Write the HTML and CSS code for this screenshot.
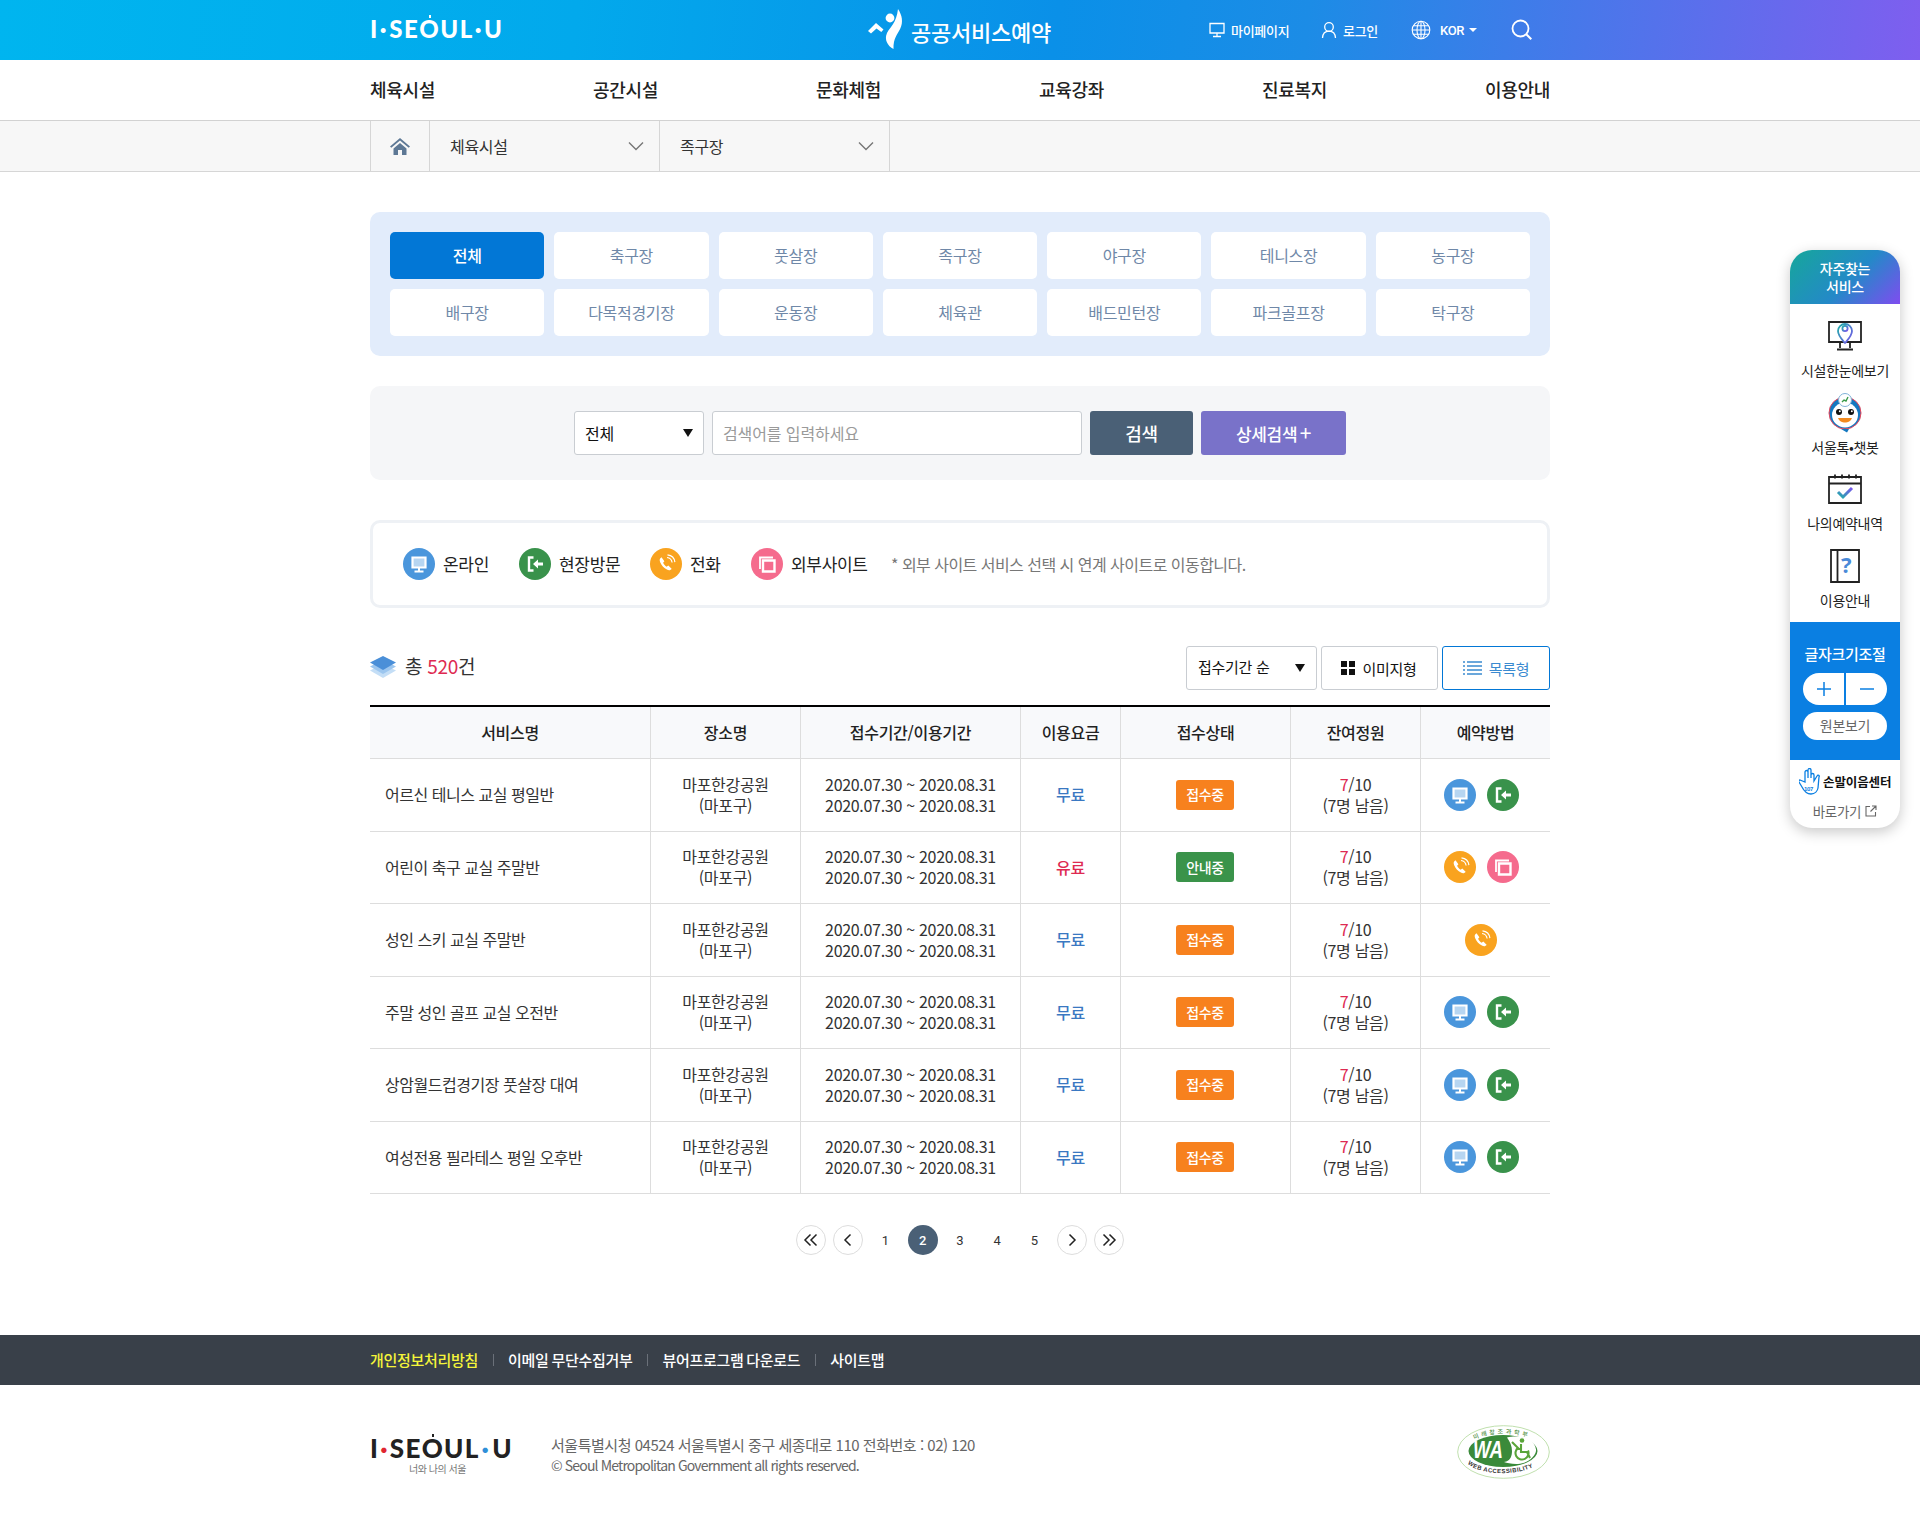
FILE: index.html
```html
<!DOCTYPE html>
<html lang="ko">
<head>
<meta charset="utf-8">
<title>공공서비스예약</title>
<link rel="stylesheet" href="styles.css">
</head>
<body>
<svg class="sprite" aria-hidden="true">
  <symbol id="i-monitor" viewBox="0 0 32 32"><path d="M9.500 9.500h13v10h-13z" fill="#fff" fill-opacity=".6" stroke="#fff" stroke-width="2.200"/><path d="M16 20v3M11.500 23.500h9" stroke="#fff" stroke-width="2" fill="none"/></symbol>
  <symbol id="i-door" viewBox="0 0 32 32"><path d="M14.500 9.500H10v13h4.500" stroke="#fff" stroke-width="2.400" fill="none"/><path d="M24 14.600h-5v-3l-5 4.400 5 4.400v-3h5z" fill="#fff"/></symbol>
  <symbol id="i-phone" viewBox="0 0 32 32"><path d="M11.500 9.200c-1.900 1-2.300 2.800-1.200 5.200 1.400 3.100 3.700 5.600 6.600 7.200 2 1 3.800.7 4.700-.9l-3.300-3.100-1.700 1.100c-1.500-1-2.700-2.400-3.500-4l1.300-1.500z" fill="#fff"/><path d="M17 9.500c2.600.3 4.700 2.300 5.100 5M17.500 6.800c4 .4 6.900 3.300 7.400 7.300" stroke="#fff" stroke-width="1.200" fill="none"/></symbol>
  <symbol id="i-window" viewBox="0 0 32 32"><path d="M9 21V9.500h13" stroke="#fff" stroke-width="1.800" fill="none"/><path d="M12 12.500h11.500v11H12z" stroke="#fff" stroke-width="2.400" fill="none"/></symbol>
</svg>

<header class="top">
  <div class="wrap top-in">
    <div class="logo logo-w">I<i class="dot">·</i><span>SE<b class="o">O</b>UL</span><i class="dot">·</i>U</div>
    <div class="brand">
      <svg class="emblem" viewBox="0 0 38 40"><circle cx="22" cy="9" r="4.400" fill="#fff"/><path d="M0 22 8 14l7.500 6.500-2.200 2.600-4.800-3.500-5.500 5z" fill="#fff"/><path d="M30 0c4 6 5.500 13 2.200 19.800-2.700 5.500-7 9.500-6.700 20.200-6-3-9.500-9.500-6.500-16 3-6 9.500-10 11-24z" fill="#fff"/></svg>
      <span class="brand-t">공공서비스예약</span>
    </div>
    <div class="util">
      <a class="util-a u1"><svg class="ui" viewBox="0 0 18 18"><path d="M2 2.500h14v9.500H2zM9 12v3.500M5 15.500h8" fill="none" stroke="#fff" stroke-width="1.300"/></svg>마이페이지</a>
      <a class="util-a u2"><svg class="ui" viewBox="0 0 18 18"><circle cx="9" cy="6" r="4.300" fill="none" stroke="#fff" stroke-width="1.300"/><path d="M2.500 17c.3-4.500 2.500-6.800 6.500-6.800s6.200 2.300 6.500 6.800" fill="none" stroke="#fff" stroke-width="1.300"/></svg>로그인</a>
      <a class="util-a u3"><svg class="ug" viewBox="0 0 20 20"><g fill="none" stroke="#fff" stroke-width="1.100"><circle cx="10" cy="10" r="8.800"/><ellipse cx="10" cy="10" rx="4" ry="8.800"/><path d="M10 1.200v17.600M1.200 10h17.600M2.400 5.800h15.200M2.400 14.200h15.200"/></g></svg>KOR<i class="caret"></i></a>
      <svg class="usearch" viewBox="0 0 22 22"><circle cx="9.500" cy="9.500" r="8" fill="none" stroke="#fff" stroke-width="1.800"/><path d="M15.300 15.300l5 5" stroke="#fff" stroke-width="2" fill="none"/></svg>
    </div>
  </div>
</header>

<nav class="gnb">
  <div class="wrap gnb-in">
    <a>체육시설</a><a>공간시설</a><a>문화체험</a><a>교육강좌</a><a>진료복지</a><a>이용안내</a>
  </div>
</nav>

<div class="crumb">
  <div class="wrap crumb-in">
    <div class="crumb-home"><svg viewBox="0 0 20 17" class="home"><path d="M10 0 0 8.500l1.300 1.300L10 2.600l8.700 7.200L20 8.500z" fill="#5d7895"/><path d="M3.500 10.500 10 5l6.500 5.500V17h-4.500v-5H8v5H3.500z" fill="#5d7895"/></svg></div>
    <div class="crumb-sel"><span>체육시설</span><svg class="chev" viewBox="0 0 16 10"><path d="M1 1.500l7 7 7-7" fill="none" stroke="#777" stroke-width="1.400"/></svg></div>
    <div class="crumb-sel"><span>족구장</span><svg class="chev" viewBox="0 0 16 10"><path d="M1 1.500l7 7 7-7" fill="none" stroke="#777" stroke-width="1.400"/></svg></div>
  </div>
</div>

<main class="wrap main">
  <section class="cats">
    <a class="cat on">전체</a><a class="cat">축구장</a><a class="cat">풋살장</a><a class="cat">족구장</a><a class="cat">야구장</a><a class="cat">테니스장</a><a class="cat">농구장</a>
    <a class="cat">배구장</a><a class="cat">다목적경기장</a><a class="cat">운동장</a><a class="cat">체육관</a><a class="cat">배드민턴장</a><a class="cat">파크골프장</a><a class="cat">탁구장</a>
  </section>

  <section class="search">
    <div class="fsel fsel-a"><span>전체</span><i class="tri"></i></div>
    <input class="kw" type="text" placeholder="검색어를 입력하세요">
    <button class="btn btn-s">검색</button>
    <button class="btn btn-d">상세검색 <span class="plus">+</span></button>
  </section>

  <section class="legend">
    <span class="lg lg1"><svg class="ic c-blue"><use href="#i-monitor"/></svg><span class="lg-t">온라인</span></span>
    <span class="lg lg2"><svg class="ic c-green"><use href="#i-door"/></svg><span class="lg-t">현장방문</span></span>
    <span class="lg lg3"><svg class="ic c-orange"><use href="#i-phone"/></svg><span class="lg-t">전화</span></span>
    <span class="lg lg4"><svg class="ic c-pink"><use href="#i-window"/></svg><span class="lg-t">외부사이트</span></span>
    <span class="lg-note">* 외부 사이트 서비스 선택 시 연계 사이트로 이동합니다.</span>
  </section>

  <section class="bar">
    <div class="total">
      <svg class="layers" viewBox="0 0 26 22"><path d="M13 8 26 14.500 13 22 0 14.500z" fill="#c4def6"/><path d="M13 4 26 10.500 13 18 0 10.500z" fill="#9cc6ef"/><path d="M13 0 26 6.500 13 14 0 6.500z" fill="#4a8fd8"/></svg>
      <span>총 <em>520</em>건</span>
    </div>
    <div class="tools">
      <div class="fsel fsel-b"><span>접수기간 순</span><i class="tri"></i></div>
      <a class="tool"><svg class="ti" viewBox="0 0 14 14"><path d="M0 0h6v6H0zM8 0h6v6H8zM0 8h6v6H0zM8 8h6v6H8z" fill="#111"/></svg>이미지형</a>
      <a class="tool tool-on"><svg class="tl" viewBox="0 0 19 14"><path d="M0 1h2M4 1h15M0 5h2M4 5h15M0 9h2M4 9h15M0 13h2M4 13h15" stroke="#3a8ad0" stroke-width="1.400" fill="none"/></svg>목록형</a>
    </div>
  </section>

  <table class="list">
    <colgroup><col class="w1"><col class="w2"><col class="w3"><col class="w4"><col class="w5"><col class="w6"><col class="w7"></colgroup>
    <thead><tr><th>서비스명</th><th>장소명</th><th>접수기간/이용기간</th><th>이용요금</th><th>접수상태</th><th>잔여정원</th><th>예약방법</th></tr></thead>
    <tbody>
      <tr><td class="nm">어르신 테니스 교실 평일반</td><td>마포한강공원<br>(마포구)</td><td>2020.07.30 ~ 2020.08.31<br>2020.07.30 ~ 2020.08.31</td><td class="free">무료</td><td><span class="bdg b-o">접수중</span></td><td><em>7</em>/10<br>(7명 남음)</td><td><span class="how"><svg class="ic c-blue"><use href="#i-monitor"/></svg><svg class="ic c-green"><use href="#i-door"/></svg></span></td></tr>
      <tr><td class="nm">어린이 축구 교실 주말반</td><td>마포한강공원<br>(마포구)</td><td>2020.07.30 ~ 2020.08.31<br>2020.07.30 ~ 2020.08.31</td><td class="paid">유료</td><td><span class="bdg b-g">안내중</span></td><td><em>7</em>/10<br>(7명 남음)</td><td><span class="how"><svg class="ic c-orange"><use href="#i-phone"/></svg><svg class="ic c-pink"><use href="#i-window"/></svg></span></td></tr>
      <tr><td class="nm">성인 스키 교실 주말반</td><td>마포한강공원<br>(마포구)</td><td>2020.07.30 ~ 2020.08.31<br>2020.07.30 ~ 2020.08.31</td><td class="free">무료</td><td><span class="bdg b-o">접수중</span></td><td><em>7</em>/10<br>(7명 남음)</td><td><span class="how"><svg class="ic c-orange"><use href="#i-phone"/></svg></span></td></tr>
      <tr><td class="nm">주말 성인 골프 교실 오전반</td><td>마포한강공원<br>(마포구)</td><td>2020.07.30 ~ 2020.08.31<br>2020.07.30 ~ 2020.08.31</td><td class="free">무료</td><td><span class="bdg b-o">접수중</span></td><td><em>7</em>/10<br>(7명 남음)</td><td><span class="how"><svg class="ic c-blue"><use href="#i-monitor"/></svg><svg class="ic c-green"><use href="#i-door"/></svg></span></td></tr>
      <tr><td class="nm">상암월드컵경기장 풋살장 대여</td><td>마포한강공원<br>(마포구)</td><td>2020.07.30 ~ 2020.08.31<br>2020.07.30 ~ 2020.08.31</td><td class="free">무료</td><td><span class="bdg b-o">접수중</span></td><td><em>7</em>/10<br>(7명 남음)</td><td><span class="how"><svg class="ic c-blue"><use href="#i-monitor"/></svg><svg class="ic c-green"><use href="#i-door"/></svg></span></td></tr>
      <tr><td class="nm">여성전용 필라테스 평일 오후반</td><td>마포한강공원<br>(마포구)</td><td>2020.07.30 ~ 2020.08.31<br>2020.07.30 ~ 2020.08.31</td><td class="free">무료</td><td><span class="bdg b-o">접수중</span></td><td><em>7</em>/10<br>(7명 남음)</td><td><span class="how"><svg class="ic c-blue"><use href="#i-monitor"/></svg><svg class="ic c-green"><use href="#i-door"/></svg></span></td></tr>
    </tbody>
  </table>

  <div class="pager">
    <a class="pg pg-b"><svg viewBox="0 0 16 14"><path d="M7.500 1.500 2 7l5.500 5.500M13.500 1.500 8 7l5.500 5.500" fill="none" stroke="#222" stroke-width="1.500"/></svg></a>
    <a class="pg pg-b"><svg viewBox="0 0 16 14"><path d="M10.500 1.500 5 7l5.500 5.500" fill="none" stroke="#222" stroke-width="1.500"/></svg></a>
    <a class="pg">1</a><a class="pg pg-on">2</a><a class="pg">3</a><a class="pg">4</a><a class="pg">5</a>
    <a class="pg pg-b"><svg viewBox="0 0 16 14"><path d="M5.500 1.500 11 7l-5.500 5.500" fill="none" stroke="#222" stroke-width="1.500"/></svg></a>
    <a class="pg pg-b"><svg viewBox="0 0 16 14"><path d="M2.500 1.500 8 7l-5.500 5.500M8.500 1.500 14 7l-5.500 5.500" fill="none" stroke="#222" stroke-width="1.500"/></svg></a>
  </div>
</main>

<footer>
  <div class="fbar">
    <div class="wrap fbar-in">
      <a class="hl">개인정보처리방침</a><a>이메일 무단수집거부</a><a>뷰어프로그램 다운로드</a><a>사이트맵</a>
    </div>
  </div>
  <div class="wrap finfo">
    <div class="flogo">
      <div class="logo logo-k">I<i class="dot d-r">·</i><span>SE<b class="o">O</b>UL</span><i class="dot d-b">·</i>U</div>
      <div class="flogo-s">너와 나의 서울</div>
    </div>
    <div class="ftext">
      <p>서울특별시청 04524 서울특별시 중구 세종대로 110 전화번호 : 02) 120</p>
      <p class="cr">© Seoul Metropolitan Government all rights reserved.</p>
    </div>
    <svg class="wa" viewBox="0 0 93 54">
      <defs>
        <path id="wa-top" d="M14 17 C26 6 66 6 80 17"/>
        <path id="wa-bot" d="M9 37 C22 52 68 52 86 36"/>
      </defs>
      <ellipse cx="46.500" cy="27" rx="45.800" ry="26.300" fill="#fff" stroke="#b9dca5" stroke-width=".9"/>
      <ellipse cx="46" cy="26" rx="34.500" ry="16" fill="#3a8a3a"/>
      <path d="M50 12.500c10-2.500 27-1 29 12 .8 6-8 14-18 14.500-6 .3-11-1-14-2 7-1 8-7 8-11 0-5-2-9-5-13.500z" fill="#fff"/>
      <text class="wa-t" x="16" y="33" textLength="30" lengthAdjust="spacingAndGlyphs">WA</text>
      <circle cx="65" cy="15.500" r="2.300" fill="#5aa53a"/>
      <path d="M55 17l7 7h3M64 19v8h6l3 6M71 25.500a6.500 6.500 0 1 1-9.500-3" fill="none" stroke="#5aa53a" stroke-width="2.100"/>
      <text class="wa-s"><textPath href="#wa-top" startOffset="6%">미래창조과학부</textPath></text>
      <text class="wa-b"><textPath href="#wa-bot" startOffset="3%">WEB ACCESSIBILITY</textPath></text>
    </svg>
  </div>
</footer>

<aside class="side">
  <div class="side-h">자주찾는<br>서비스</div>
  <div class="side-list">
    <a class="si">
      <span class="si-i"><svg class="si-s1" viewBox="0 0 34 32"><defs><linearGradient id="gp" x1="0" y1="0" x2="1" y2="1"><stop offset="0" stop-color="#1fb0a8"/><stop offset="1" stop-color="#7a52ee"/></linearGradient></defs><path d="M1 3h32v20H1zM12 23v6M22 23v6M9 30.500h16" fill="none" stroke="#222" stroke-width="1.800"/><path d="M17 24c-4-4.500-7-7.500-7-12a7 7 0 0 1 14 0c0 4.500-3 7.500-7 12z" fill="#fff" stroke="url(#gp)" stroke-width="1.800"/><circle cx="17" cy="9.500" r="2.600" fill="none" stroke="url(#gp)" stroke-width="1.800"/></svg></span>
      <span class="si-t">시설한눈에보기</span>
    </a>
    <a class="si">
      <span class="si-i"><svg class="si-s2" viewBox="0 0 36 40"><circle cx="18" cy="20" r="16" fill="#1478c0" stroke="#e8465a" stroke-width="1"/><ellipse cx="18" cy="22" rx="13" ry="12.500" fill="#fff"/><path d="M14 36l8 0-2 3.500z" fill="#1478c0"/><circle cx="12" cy="19" r="3" fill="#111"/><circle cx="24" cy="19" r="3" fill="#111"/><circle cx="12.800" cy="18.200" r="1" fill="#fff"/><circle cx="24.800" cy="18.200" r="1" fill="#fff"/><path d="M11 25h14c-1.500 3.500-4 4.500-7 4.500S12.500 28.500 11 25z" fill="#f28a1e"/><circle cx="18" cy="7" r="6.500" fill="#fff" stroke="#7fb2d8"/><path d="M15 9l2-2 2 1 2-4" stroke="#3a9a4a" stroke-width="1.400" fill="none"/></svg></span>
      <span class="si-t">서울톡•챗봇</span>
    </a>
    <a class="si">
      <span class="si-i"><svg class="si-s3" viewBox="0 0 34 30"><defs><linearGradient id="gc" x1="0" y1="1" x2="1" y2="0"><stop offset="0" stop-color="#1fb0a8"/><stop offset="1" stop-color="#7a52ee"/></linearGradient></defs><path d="M1 3h32v26H1zM1 9.500h32M7 .5v4M14 .5v4M21 .5v4M28 .5v4" fill="none" stroke="#222" stroke-width="1.800"/><path d="M10 18l5 5 9-9" fill="none" stroke="url(#gc)" stroke-width="3"/></svg></span>
      <span class="si-t">나의예약내역</span>
    </a>
    <a class="si">
      <span class="si-i"><svg class="si-s4" viewBox="0 0 30 34"><path d="M1 1h28v32H1zM7.500 1v32" fill="none" stroke="#222" stroke-width="1.800"/><text class="q" x="11" y="24">?</text></svg></span>
      <span class="si-t">이용안내</span>
    </a>
  </div>
  <div class="side-f">
    <div class="sf-t">글자크기조절</div>
    <div class="sf-pm"><span><svg viewBox="0 0 14 14"><path d="M7 0v14M0 7h14" stroke="#0a7fe2" stroke-width="1.500"/></svg></span><span><svg viewBox="0 0 14 14"><path d="M0 7h14" stroke="#0a7fe2" stroke-width="1.500"/></svg></span></div>
    <div class="sf-o">원본보기</div>
  </div>
  <div class="side-b">
    <div class="sb-l"><svg class="hand" viewBox="0 0 21 27"><path d="M1 12l5 2V4c0-2 3-2 3 0v6V2c0-2 3-2 3 0v8-3c0-2 3-2 3 0v6l3-5c1-2 3 0 2 1l-1 11c-.5 3-3 6-7 6-5 0-8-5-9-7L0 14c-.5-1 0-2 1-2z" fill="#fff" stroke="#0a7fe2" stroke-width="1.300"/><text class="h107" x="5" y="23">107</text></svg><span>손말이음센터</span></div>
    <div class="sb-g">바로가기<svg class="ext" viewBox="0 0 12 12"><path d="M5 1.500H1v9.500h9.500V7M7 1h4v4M11 1 5.500 6.500" fill="none" stroke="#666" stroke-width="1.100"/></svg></div>
  </div>
</aside>
</body>
</html>
```

FILE: styles.css
```css
* { box-sizing: border-box; }
html, body { margin: 0; padding: 0; }
body {
  position: relative;
  font-family: "Noto Sans CJK KR", "Noto Sans", sans-serif;
  font-size: 16px;
  letter-spacing: -0.3px;
  color: #333;
  background: #fff;
}
a { color: inherit; text-decoration: none; }
em { font-style: normal; }
p { margin: 0; }
.sprite { position: absolute; width: 0; height: 0; overflow: hidden; }
.wrap { width: 1180px; margin: 0 auto; }

/* top */
.top {
  height: 60px;
  background: linear-gradient(97deg, #00b5ef 0%, #02a9ec 30%, #0a90e8 55%, #1c8ce6 68%, #7f5eef 100%);
  color: #fff;
}
.top-in { display: flex; align-items: center; height: 60px; }
.logo { font-family: Lato, "Noto Sans", sans-serif; font-weight: 900; white-space: nowrap; line-height: 1; }
.logo span { position: relative; }
.logo i { font-style: normal; }
.logo .o { font-weight: 900; position: relative; }
.logo .o::before {
  content: ""; position: absolute; left: 50%; top: 5%;
  width: 2px; height: 3px; margin-left: -1px; background: currentColor;
}
.logo-w { font-size: 24px; width: 132px; color: #fff; letter-spacing: 1.550px; margin-top: -2px; }
.logo-w .dot { margin: 0 1px; }
.brand { display: flex; align-items: center; margin-left: 366px; width: 200px; }
.emblem { width: 38px; height: 40px; display: block; margin-top: -2px; }
.brand-t { font-size: 22px; font-weight: 500; margin-left: 5px; letter-spacing: -0.25px; line-height: 1; margin-top: 1px; white-space: nowrap; }
.util { display: flex; align-items: center; margin-left: 140px; font-size: 13px; font-weight: 500; }
.util-a { display: flex; align-items: center; white-space: nowrap; }
.ui { width: 18px; height: 18px; margin-right: 5px; }
.ug { width: 20px; height: 20px; margin-right: 9px; }
.u1 { width: 112px; }
.u2 { width: 91px; }
.u3 { width: 101px; font-size: 13px; font-family: Roboto, sans-serif; }
.caret { width: 0; height: 0; margin-left: 5px; border: 4px solid transparent; border-top-color: #fff; border-bottom: 0; }
.usearch { width: 22px; height: 22px; margin-left: -1px; }

/* gnb */
.gnb { height: 61px; border-bottom: 1px solid #d2d2d2; }
.gnb-in { display: flex; justify-content: space-between; align-items: center; height: 60px; padding-bottom: 2px; font-size: 18px; font-weight: 500; color: #222; }

/* crumb */
.crumb { height: 51px; background: #f7f7f7; border-bottom: 1px solid #d6d6d6; }
.crumb-in { display: flex; height: 50px; border-left: 1px solid #d6d6d6; }
.crumb-home { width: 59px; display: flex; align-items: center; justify-content: center; border-right: 1px solid #d6d6d6; }
.home { width: 20px; height: 17px; }
.crumb-sel { width: 230px; display: flex; align-items: center; justify-content: space-between; padding: 0 15px 0 20px; border-right: 1px solid #d6d6d6; color: #333; }
.crumb-sel span { margin-top: -1px; }
.chev { width: 16px; height: 10px; }

/* main */
.main { padding-top: 40px; display: block; }
.cats { display: grid; grid-template-columns: repeat(7, 1fr); gap: 10px; padding: 20px; background: #e2ecfb; border-radius: 10px; }
.cat { height: 47px; padding-bottom: 2px; display: flex; align-items: center; justify-content: center; background: #fff; border-radius: 5px; color: #6f88a8; }
.cat.on { background: #0277d6; color: #fff; font-weight: 500; }

.search { margin-top: 30px; padding: 25px 0; display: flex; justify-content: center; gap: 8px; background: #f5f6f8; border-radius: 10px; }
.fsel { display: flex; align-items: center; justify-content: space-between; height: 44px; background: #fff; border: 1px solid #c9cdd2; border-radius: 3px; color: #111; }
.fsel-a { width: 130px; padding: 0 10px; }
.fsel-b { width: 131px; padding: 0 11px; font-size: 15px; }
.fsel-b span { margin-top: -3px; }
.tri { width: 0; height: 0; border: 5px solid transparent; border-top: 8px solid #111; border-bottom: 0; }
.kw { width: 370px; height: 44px; padding: 0 10px; border: 1px solid #c9cdd2; border-radius: 3px; font: inherit; letter-spacing: -0.1px; background: #fff; outline: 0; }
.kw::placeholder { color: #9a9a9a; opacity: 1; }
.btn { height: 44px; border: 0; border-radius: 3px; color: #fff; font-family: inherit; font-weight: 500; letter-spacing: inherit; }
.btn-s { width: 103px; background: #4a6076; font-size: 18px; }
.btn-d { width: 145px; background: #7972c9; font-size: 17px; }
.plus { font-size: 21px; font-weight: 400; line-height: 1; margin-left: -2px; }

.legend { margin-top: 40px; height: 88px; display: flex; align-items: center; padding-left: 30px; border: 3px solid #eef1f5; border-radius: 10px; color: #222; font-size: 17px; }
.lg { display: flex; align-items: center; }
.lg .ic { margin-right: 8px; }
.lg-t { margin-top: -2px; }
.lg1 { width: 116px; }
.lg2 { width: 131px; }
.lg3 { width: 101px; }
.lg4 { width: 140px; }
.lg-note { color: #777; font-size: 16px; letter-spacing: -0.530px; }
.ic { width: 32px; height: 32px; border-radius: 50%; flex: none; display: block; }
.c-blue { background: #4a96dc; }
.c-green { background: #39924b; }
.c-orange { background: #f9a31f; }
.c-pink { background: #f56b8d; }

.bar { margin-top: 38px; display: flex; align-items: center; justify-content: space-between; }
.total { display: flex; align-items: center; font-size: 19px; color: #333; margin-top: -5px; }
.total em { color: #de2a52; }
.layers { width: 26px; height: 22px; margin-right: 9px; margin-top: 2px; }
.tools { display: flex; gap: 4px; }
.tool { height: 44px; display: flex; align-items: center; justify-content: center; border: 1px solid #c9cdd2; border-radius: 3px; font-size: 15px; color: #111; width: 117px; background: #fff; }
.tool-on { width: 108px; border-color: #0277d6; color: #3a8ad0; }
.ti { width: 14px; height: 14px; margin-right: 7px; margin-left: -1px; }
.tl { width: 19px; height: 14px; margin-right: 7px; }

.list { width: 1180px; margin-top: 15px; border-collapse: separate; border-spacing: 0; table-layout: fixed; border-top: 2px solid #000; }
.w1 { width: 281px; } .w2 { width: 150px; } .w3 { width: 220px; } .w4 { width: 100px; } .w5 { width: 170px; } .w6 { width: 130px; } .w7 { width: 129px; }
.list th, .list td { padding: 0; text-align: center; border-right: 1px solid #ddd; border-bottom: 1px solid #ddd; line-height: 21px; }
.list th:last-child, .list td:last-child { border-right: 0; }
.list th { height: 52px; background: #f8f9fb; font-weight: 500; color: #222; }
.list td { height: 72.500px; color: #333; }
.list td.nm { text-align: left; padding-left: 15px; letter-spacing: -0.470px; }
.list td.free { color: #3a78c2; font-weight: 500; }
.list td.paid { color: #de2a52; font-weight: 500; }
.list td em { color: #de2a52; }
.bdg { display: inline-flex; align-items: center; justify-content: center; width: 58px; height: 30px; margin-right: 1px; border-radius: 3px; color: #fff; font-size: 14px; font-weight: 500; vertical-align: middle; }
.b-o { background: #f7811e; }
.b-g { background: #3a934a; }
.how { display: flex; justify-content: center; gap: 11px; padding-right: 9px; }

.pager { margin-top: 31px; display: flex; justify-content: center; gap: 7.250px; height: 30px; }
.pg { width: 30px; height: 30px; border-radius: 50%; display: flex; align-items: center; justify-content: center; font-family: Roboto, sans-serif; font-size: 13px; color: #333; letter-spacing: 0; }
.pg-b { border: 1px solid #ddd; }
.pg-b svg { width: 16px; height: 14px; }
.pg-on { background: #4a6076; color: #fff; font-weight: 500; }

/* footer */
footer { margin-top: 80px; }
.fbar { height: 50px; background: #394049; }
.fbar-in { display: flex; align-items: center; height: 50px; padding-bottom: 2px; font-size: 15px; font-weight: 500; color: #fff; word-spacing: -1px; }
.fbar-in a + a { margin-left: 15px; padding-left: 15px; position: relative; }
.fbar-in a + a::before { content: ""; position: absolute; left: 0; top: 5px; height: 12px; width: 1px; background: #6a7079; }
.fbar-in .hl { color: #f5f53a; }
.finfo { height: 145px; display: flex; align-items: flex-start; }
.flogo { width: 141px; margin-top: 50px; }
.logo-k { font-size: 26px; color: #222; text-align: left; letter-spacing: 1.300px; }
.d-r { color: #e0262f; margin: 0 1px; }
.d-b { color: #2f8fd8; margin: 0 2px; }
.flogo-s { font-size: 10px; color: #777; line-height: 14px; margin-top: 1px; padding-right: 6px; text-align: center; letter-spacing: -0.5px; }
.ftext { margin-left: 40px; margin-top: 50px; font-size: 15px; color: #666; letter-spacing: -0.470px; line-height: 20px; }
.ftext .cr { font-size: 14px; letter-spacing: -0.850px; }
.wa { width: 93px; height: 54px; margin-left: auto; margin-top: 40px; }
.wa-t { font-family: "Liberation Sans", sans-serif; font-weight: 700; font-style: italic; font-size: 23px; fill: #fff; letter-spacing: 0; }
.wa-s { font-size: 6px; line-height: 1; fill: #4f8f3f; letter-spacing: 2.500px; font-weight: 500; }
.wa-b { font-family: "Liberation Sans", sans-serif; font-weight: 700; font-size: 6px; fill: #333; letter-spacing: .4px; }

/* side */
.side { position: absolute; top: 250px; left: 1790px; width: 110px; height: 578px; border-radius: 22px; background: #fff; box-shadow: 0 4px 14px rgba(0,0,0,.22); overflow: hidden; }
.side-h { height: 54px; display: flex; align-items: center; justify-content: center; text-align: center; font-size: 14px; font-weight: 500; line-height: 18px; color: #fff; background: linear-gradient(135deg, #16a79a 0%, #2489c8 55%, #7f4cf0 100%); }
.side-list { padding: 8px 0 4px; }
.si { display: flex; flex-direction: column; align-items: center; height: 76.500px; }
.si-i { height: 38px; margin-top: 4px; display: flex; align-items: center; justify-content: center; }
.si-t { height: 20px; margin-top: 6px; line-height: 20px; font-size: 14px; color: #222; white-space: nowrap; }
.si-s1 { width: 34px; height: 32px; }
.si-s2 { width: 36px; height: 40px; margin-top: 2px; }
.si-s3 { width: 34px; height: 30px; margin-top: 2px; }
.si-s4 { width: 30px; height: 34px; margin-top: 2px; }
.q { font-family: "Noto Sans", sans-serif; font-weight: 700; font-size: 22px; fill: #4a8ad8; }
.side-f { height: 138px; background: #0a7fe2; padding-top: 22px; display: flex; flex-direction: column; align-items: center; color: #fff; }
.sf-t { font-size: 15px; font-weight: 500; line-height: 20px; }
.sf-pm { margin-top: 9px; width: 84px; height: 32px; display: flex; gap: 2px; }
.sf-pm span { flex: 1; background: #fff; display: flex; align-items: center; justify-content: center; }
.sf-pm span:first-child { border-radius: 16px 0 0 16px; }
.sf-pm span:last-child { border-radius: 0 16px 16px 0; }
.sf-pm svg { width: 14px; height: 14px; }
.sf-o { margin-top: 7px; width: 84px; height: 28px; border-radius: 14px; background: #fff; color: #666; font-size: 14px; line-height: 27px; text-align: center; }
.side-b { padding-top: 8px; }
.sb-l { display: flex; align-items: center; padding-left: 9px; }
.sb-l span { font-size: 12.500px; font-weight: 700; color: #111; margin-left: 3px; white-space: nowrap; letter-spacing: -0.1px; }
.hand { width: 21px; height: 27px; flex: none; }
.h107 { font-size: 6px; font-weight: 700; fill: #0a7fe2; font-family: "Liberation Sans", sans-serif; }
.sb-g { margin-top: 6px; display: flex; align-items: center; justify-content: center; font-size: 13.500px; line-height: 20px; color: #666; }
.ext { width: 12px; height: 12px; margin-left: 4px; }
```
